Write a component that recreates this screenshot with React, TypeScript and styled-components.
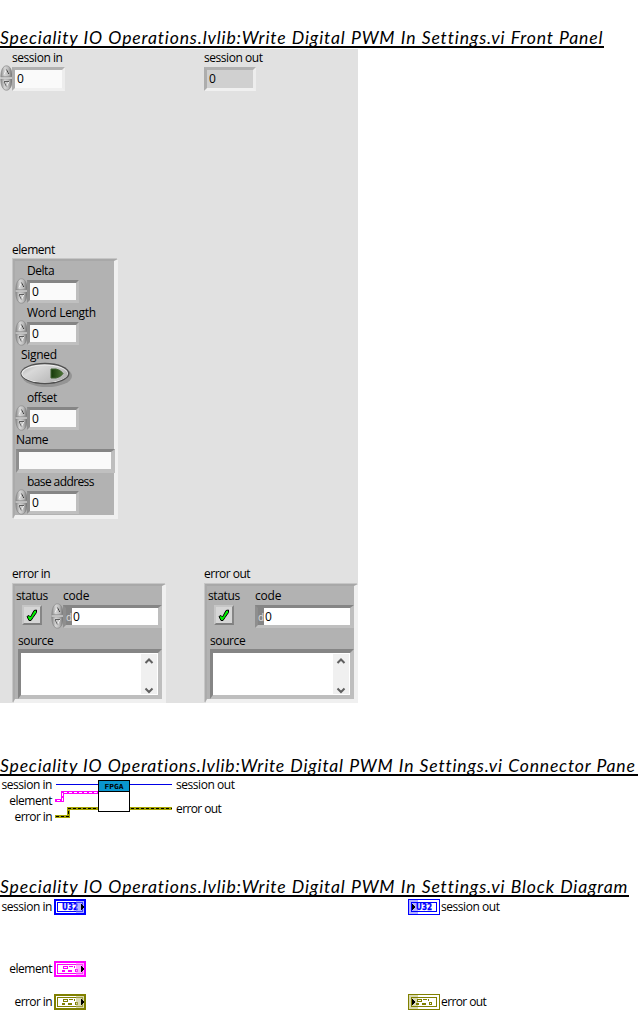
import React from "react";
import styled, { createGlobalStyle } from "styled-components";

const GlobalStyle = createGlobalStyle`
  body { margin: 0; background: #fff; overflow: hidden; }
  *, *::before, *::after { box-sizing: border-box; }
  svg { display: block; flex: none; }
`;

const Page = styled.main`
  width: 638px;
  height: 1035px;
  overflow: hidden;
  display: flex;
  flex-direction: column;
  align-items: flex-start;
  background: #fff;
  color: #000;
  font-family: "Open Sans", "Noto Sans", sans-serif;
  font-size: 12px;
`;

const Title = styled.h1<{ $top: number; $width: number; $track?: number }>`
  margin: ${(p) => p.$top}px 0 0;
  width: ${(p) => p.$width}px;
  height: 22px;
  flex: none;
  overflow: hidden;
  white-space: nowrap;
  border-bottom: 2px solid #000;
  font: italic 400 17.6px/23px Lato, sans-serif;
  letter-spacing: ${(p) => p.$track ?? 0.84}px;
  word-spacing: 0.4px;
`;

const Label = styled.span<{ $indent?: number; $track?: number }>`
  height: 16px;
  line-height: 16px;
  padding-left: ${(p) => p.$indent ?? 0}px;
  white-space: nowrap;
  letter-spacing: ${(p) => p.$track ?? -0.45}px;
`;

const Panel = styled.section`
  margin-top: 1px;
  width: 358px;
  height: 654px;
  flex: none;
  display: grid;
  grid-template-columns: 204px 154px;
  grid-template-rows: 192px 324px 138px;
  background: #e1e1e1;

  ${Label} {
    line-height: 18px;
  }
`;

const Cell = styled.div<{ $indent?: number }>`
  display: flex;
  flex-direction: column;
  align-items: flex-start;
  padding-left: ${(p) => p.$indent ?? 0}px;
`;

const FieldRow = styled.div<{ $indent?: number }>`
  display: flex;
  align-items: flex-start;
  height: 26px;
  padding-left: ${(p) => p.$indent ?? 0}px;
`;

const Numeric = styled.div<{ $tone: "light" | "dark" | "off" }>`
  width: ${(p) => (p.$tone === "light" ? 53 : 52)}px;
  height: ${(p) => (p.$tone === "dark" ? 23 : 24)}px;
  margin-top: 2px;
  margin-left: ${(p) => (p.$tone === "off" ? 0 : -1)}px;
  padding-left: 2px;
  line-height: 18px;
  border: 3px solid;
  border-color: ${(p) =>
    p.$tone === "dark" ? "#858585 #bebebe #c0c0c0 #8e8e8e" : "#b1b1b1 #ededed #f0f0f0 #adadad"};
  background: ${(p) => (p.$tone === "off" ? "#d0d0d0" : "#fafafa")};
`;

const Cluster = styled.div<{ $w: number; $h: number; $gap: number }>`
  width: ${(p) => p.$w - 1}px;
  height: ${(p) => p.$h - 1}px;
  margin: ${(p) => p.$gap + 1}px 0 0 1px;
  border: solid;
  border-width: 2px 4px 4px 2px;
  border-color: #a8a8a8 #f0f0f0 #f0f0f0 #ababab;
  box-shadow: -1px -1px 0 #c6c6c6;
  background: #b2b2b2;
  padding-top: 1px;
`;

const Item = styled.div<{ $h?: number }>`
  height: ${(p) => p.$h ?? 42}px;
  display: flex;
  flex-direction: column;
  align-items: flex-start;
`;

const StringBox = styled.div`
  width: 99px;
  height: 24px;
  margin: 2px 0 0 1px;
  background: #fafafa;
  border: 3px solid;
  border-width: 3px 4px 4px 3px;
  border-color: #858585 #bebebe #c0c0c0 #8e8e8e;
`;

const Columns = styled.div`
  display: flex;
  height: 45px;
`;

const StatusColumn = styled.div`
  width: 36px;
  padding-left: 1px;
  display: flex;
  flex-direction: column;
`;

const StatusButton = styled.div`
  width: 20px;
  height: 20px;
  margin: 2px 0 0 6px;
  border: 2px solid;
  border-color: #c6c6c6 #868686 #808080 #c6c6c6;
  background: #d6d6d6;
  display: flex;
  align-items: center;
  justify-content: center;
`;

const CodeBox = styled.div<{ $indent: number }>`
  width: 99px;
  height: 23px;
  margin-top: 2px;
  margin-left: ${(p) => p.$indent}px;
  display: flex;
  line-height: 18px;
  border: 3px solid;
  border-right-width: 4px;
  border-color: #858585 #bebebe #c0c0c0 #8e8e8e;
  background: #fff;
`;

const Radix = styled.span`
  width: 6px;
  margin-right: 1px;
  background: #858585;
  color: #dedede;
  font-size: 10px;
  overflow: hidden;
`;

const SourceBox = styled.div`
  width: 144px;
  height: 50px;
  margin: 1px 0 0 3px;
  display: flex;
  justify-content: flex-end;
  padding: 1px;
  border: 4px solid;
  border-left-width: 3px;
  border-color: #858585 #bebebe #bebebe #858585;
  background: #fff;
`;

const ScrollBar = styled.div`
  width: 16px;
  height: 40px;
  background: #f0f0f0;
  display: flex;
  flex-direction: column;
  justify-content: space-between;
  align-items: center;
  padding: 4px 0 0;
`;

const Connector = styled.section`
  height: 44px;
  margin-top: 1px;
  flex: none;
  display: flex;
`;

const WireLabels = styled.div<{ $side: "left" | "right" }>`
  width: ${(p) => (p.$side === "left" ? 52 : 66)}px;
  display: flex;
  flex-direction: column;
  align-items: ${(p) => (p.$side === "left" ? "flex-end" : "flex-start")};
  gap: ${(p) => (p.$side === "left" ? 0 : 8)}px;
  padding-left: ${(p) => (p.$side === "left" ? 0 : 3)}px;
`;

const Diagram = styled.section`
  margin-top: 2px;
  width: 638px;
  flex: none;
  display: grid;
  grid-template-columns: 52px 356px 1fr;
  grid-template-rows: 62px 33px 16px;
`;

const Name = styled.div`
  display: flex;
  justify-content: flex-end;
`;

const Slot = styled.div`
  display: flex;
  padding-left: 2px;
`;

const Output = styled.div`
  display: flex;
  gap: 1px;
`;

const Spinner = () => (
  <svg width="13" height="26" viewBox="0 0 13 26">
    <defs>
      <linearGradient id="knob" x1="0" x2="1" y1="0" y2="0">
        <stop offset="0" stopColor="#8c8c8c" />
        <stop offset=".35" stopColor="#d6d6d6" />
        <stop offset=".65" stopColor="#bcbcbc" />
        <stop offset="1" stopColor="#6e6e6e" />
      </linearGradient>
    </defs>
    <path d="M.8 12.200C.8 5 3 .8 6.500.8s5.700 4.200 5.700 11.400z" fill="url(#knob)" stroke="#8a8a8a" strokeWidth=".7" />
    <path d="M.8 13.800C.8 21 3 25.200 6.500 25.200s5.700-4.200 5.700-11.400z" fill="url(#knob)" stroke="#858585" strokeWidth=".7" />
    <path d="M1 12h11" stroke="#8a8a8a" />
    <path d="M1 13h11" stroke="#e6e6e6" />
    <path d="M4 9.500l2.500-5 2.500 5" fill="none" stroke="#f0f0f0" />
    <path d="M6.500 4.500l2.300 4.600" stroke="#404040" />
    <path d="M9 16.500l-2.500 5-2.500-5" fill="none" stroke="#eee" />
    <path d="M4 16.500h5M4.200 17l2.200 4.500" stroke="#505050" strokeWidth=".9" fill="none" />
  </svg>
);

const Toggle = () => (
  <svg width="54" height="26" viewBox="0 0 54 26">
    <defs>
      <linearGradient id="cap" x1="0" x2="1" y1="0" y2=".6">
        <stop offset="0" stopColor="#b2b2b2" />
        <stop offset=".3" stopColor="#d9d9d9" />
        <stop offset="1" stopColor="#b5b5b5" />
      </linearGradient>
      <linearGradient id="led">
        <stop offset="0" stopColor="#153909" />
        <stop offset="1" stopColor="#4d7436" />
      </linearGradient>
    </defs>
    <ellipse cx="27" cy="14" rx="25" ry="11" fill="#949494" />
    <ellipse cx="25" cy="11.500" rx="24.500" ry="10.700" fill="#505050" />
    <ellipse cx="24.700" cy="11.500" rx="23.300" ry="9.300" fill="#ededed" />
    <ellipse cx="25" cy="11.900" rx="22.500" ry="8.400" fill="url(#cap)" />
    <path d="M31 7h5q5 1 7 4.500-2 3.500-7 4.500h-5z" fill="url(#led)" stroke="#3f6230" strokeLinejoin="round" />
  </svg>
);

const Check = () => (
  <svg width="12" height="13" viewBox="0 0 12 13">
    <path d="M1 7.500l2-1 1.500 1.500L8 1.500l2.500-.5v2.500L7 8.500l-2 3H3z" fill="#00f000" stroke="#000" />
  </svg>
);

const Chevron = ({ down }: { down?: boolean }) => (
  <svg width="10" height="7" viewBox="0 0 10 7">
    <path d={down ? "M1.500 1.500L5 5l3.500-3.500" : "M1.500 5L5 1.500 8.500 5"} fill="none" stroke="#606060" strokeWidth="2" />
  </svg>
);

type Kind = "u32" | "cluster";

const Terminal = ({ color, kind, out }: { color: string; kind: Kind; out?: boolean }) => (
  <svg width="32" height="16" viewBox="0 0 32 16" shapeRendering="crispEdges">
    {out ? (
      <path d="M.5.5h31v15H.5z" fill="#fff" stroke={color} />
    ) : (
      <path d="M1 1h30v14H1z" fill="#fff" stroke={color} strokeWidth="2" />
    )}
    <path d="M3.500 3.500h25v9h-25z" fill="none" stroke={color} />
    {kind === "u32" ? (
      <text
        x="8"
        y="11"
        textLength="16"
        lengthAdjust="spacingAndGlyphs"
        fontFamily="DejaVu Sans"
        fontWeight="700"
        fontSize="8.600"
        fill={color}
        stroke={color}
        strokeWidth=".3"
      >
        U32
      </text>
    ) : (
      <g fill="none" stroke={color}>
        <path d="M9.500 5.500h4v2h-4zM15 5.500h4M20.500 5v2M14 9.500h4M21.500 8.500h2v2h-2z" />
        <path d="M8 10h3M14 10h4" strokeWidth="2" />
      </g>
    )}
    {out ? (
      <>
        <path d="M1 1h9v14H1z" fill={color} opacity=".3" />
        <path d="M4 4.500v7l4-3.500z" fill="#000" />
      </>
    ) : (
      <>
        <path d="M22 2h8v12h-8z" fill="#fff" opacity=".35" />
        <path d="M22 2h10v12H22z" fill={color} opacity=".3" />
        <path d="M27 4.500v7l3.500-3.500z" fill="#000" />
      </>
    )}
  </svg>
);

const Wires = () => (
  <svg width="121" height="36" viewBox="52 777 121 36" overflow="visible" shapeRendering="crispEdges">
    <path d="M56 784.500h42M130 784.500h42" stroke="#0000e6" fill="none" />
    <path d="M55 800.500h7.500v-8H98" stroke="#f0f" strokeWidth="3" fill="none" />
    <path d="M57 800.500h5.500v-8H98" stroke="#fff" strokeDasharray="3 2" fill="none" />
    <path d="M55 816.500h13.500v-8H98M130 808.500h42" stroke="#a3a300" strokeWidth="3" fill="none" />
    <path d="M56 816.500h12.500v-8H98M131 808.500h41" stroke="#000" strokeDasharray="3 2" fill="none" />
    <path d="M98.500 780.500h31v31h-31z" fill="#fff" stroke="#000" />
    <path d="M99 781h30v10H99z" fill="#0996cf" />
    <path d="M99 791.500h30" stroke="#000" />
    <text
      x="104.500"
      y="788.500"
      textLength="19"
      lengthAdjust="spacingAndGlyphs"
      fontFamily="DejaVu Sans Mono"
      fontSize="7"
      fontWeight="700"
    >
      FPGA
    </text>
  </svg>
);

const NumberItem = ({ name, track }: { name: string; track?: number }) => (
  <Item>
    <Label $indent={12} $track={track}>{name}</Label>
    <FieldRow>
      <Spinner />
      <Numeric $tone="dark">0</Numeric>
    </FieldRow>
  </Item>
);

const ErrorCluster = ({ name, editable }: { name: string; editable?: boolean }) => (
  <>
    <Label $track={-0.5}>{name}</Label>
    <Cluster $w={154} $h={120} $gap={2}>
      <Columns>
        <StatusColumn>
          <Label $track={-0.35}>status</Label>
          <StatusButton>
            <Check />
          </StatusButton>
        </StatusColumn>
        <Item>
          <Label $indent={12} $track={-0.2}>code</Label>
          <FieldRow>
            {editable && <Spinner />}
            <CodeBox $indent={editable ? -1 : 12}>
              <Radix>d</Radix>0
            </CodeBox>
          </FieldRow>
        </Item>
      </Columns>
      <Item>
        <Label $indent={3} $track={-0.4}>source</Label>
        <SourceBox>
          <ScrollBar>
            <Chevron />
            <Chevron down />
          </ScrollBar>
        </SourceBox>
      </Item>
    </Cluster>
  </>
);

const LIB = "Speciality IO Operations.lvlib:Write Digital PWM In Settings.vi";

export default function App() {
  return (
    <Page>
      <GlobalStyle />
      <Title $top={26} $width={604}>{LIB} Front Panel</Title>
      <Panel>
        <Cell>
          <Label $indent={12}>session in</Label>
          <FieldRow>
            <Spinner />
            <Numeric $tone="light">0</Numeric>
          </FieldRow>
        </Cell>
        <Cell>
          <Label>session out</Label>
          <FieldRow>
            <Numeric $tone="off">0</Numeric>
          </FieldRow>
        </Cell>
        <Cell $indent={12}>
          <Label>element</Label>
          <Cluster $w={106} $h={261} $gap={1}>
            <NumberItem name="Delta" />
            <NumberItem name="Word Length" track={-0.3} />
            <Item $h={43}>
              <Label $indent={6} $track={-0.3}>Signed</Label>
              <FieldRow $indent={5}>
                <Toggle />
              </FieldRow>
            </Item>
            <NumberItem name="offset" track={-0.35} />
            <Item>
              <Label $indent={1} $track={-0.35}>Name</Label>
              <FieldRow>
                <StringBox />
              </FieldRow>
            </Item>
            <NumberItem name="base address" track={-0.6} />
          </Cluster>
        </Cell>
        <Cell />
        <Cell $indent={12}>
          <ErrorCluster name="error in" editable />
        </Cell>
        <Cell>
          <ErrorCluster name="error out" />
        </Cell>
      </Panel>

      <Title $top={51} $width={638} $track={0.8}>{LIB} Connector Pane</Title>
      <Connector>
        <WireLabels $side="left">
          <Label>session in</Label>
          <Label>element</Label>
          <Label $track={-0.6}>error in</Label>
        </WireLabels>
        <Wires />
        <WireLabels $side="right">
          <Label>session out</Label>
          <Label $track={-0.6}>error out</Label>
        </WireLabels>
      </Connector>

      <Title $top={54} $width={629}>{LIB} Block Diagram</Title>
      <Diagram>
        <Name><Label>session in</Label></Name>
        <Slot><Terminal color="#0000ff" kind="u32" /></Slot>
        <Output>
          <Terminal color="#0000ff" kind="u32" out />
          <Label>session out</Label>
        </Output>
        <Name><Label>element</Label></Name>
        <Slot><Terminal color="#ff00ff" kind="cluster" /></Slot>
        <Output />
        <Name><Label $track={-0.6}>error in</Label></Name>
        <Slot><Terminal color="#808000" kind="cluster" /></Slot>
        <Output>
          <Terminal color="#808000" kind="cluster" out />
          <Label $track={-0.6}>error out</Label>
        </Output>
      </Diagram>
    </Page>
  );
}
